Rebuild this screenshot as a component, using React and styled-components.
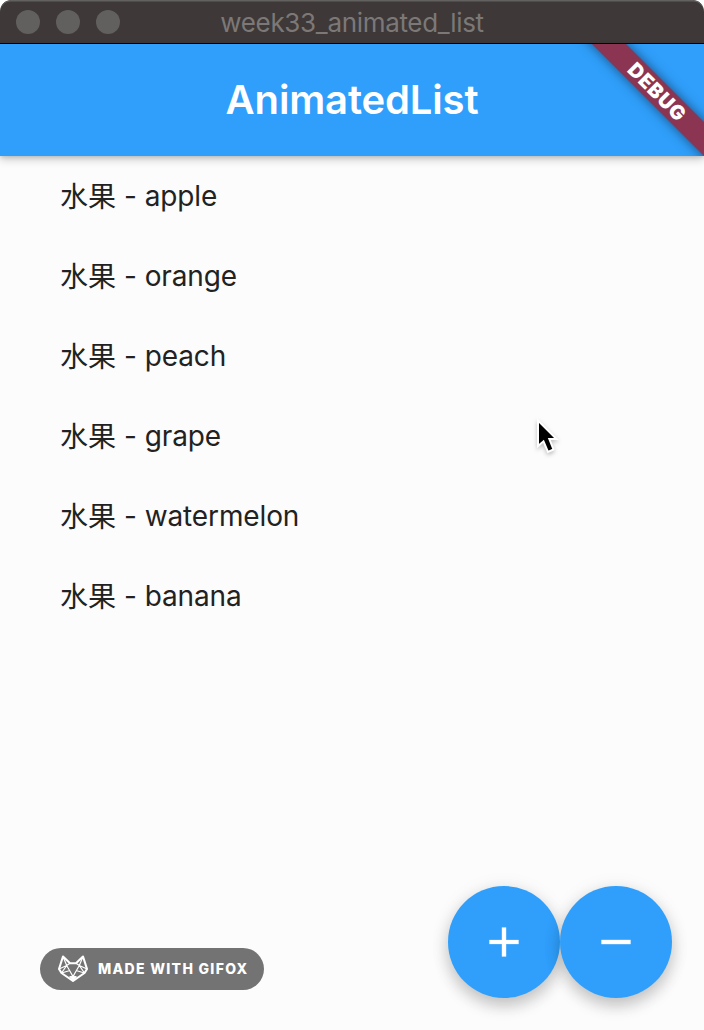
import React from "react";
import styled, { createGlobalStyle } from "styled-components";

const GlobalStyle = createGlobalStyle`
  *, *::before, *::after { box-sizing: border-box; }
  body { margin: 0; background: #fff; font-family: Inter, "Noto Sans CJK SC", sans-serif; }
`;

const Window = styled.div`
  position: relative;
  display: flex;
  flex-direction: column;
  width: 704px;
  height: 1030px;
  overflow: hidden;
  border-radius: 11px 11px 0 0;
  background: #fcfcfc;
`;

const TitleBar = styled.header`
  display: grid;
  grid-template-columns: 120px 1fr 120px;
  align-items: center;
  flex: none;
  height: 44px;
  padding: 0 16px;
  background: #3e3838;
  border-bottom: 1px solid #000;
  border-radius: 11px 11px 0 0;
  box-shadow: inset 0 1.5px 0 #636160;
`;

const Lights = styled.div`
  display: flex;
  gap: 16px;
`;

const Light = styled.span`
  width: 24px;
  height: 24px;
  border-radius: 50%;
  background: #625f5f;
`;

const WindowTitle = styled.div`
  text-align: center;
  white-space: nowrap;
  font-size: 26px;
  line-height: 32px;
  letter-spacing: -0.32px;
  color: #7c7877;
  padding-top: 2px;
`;

const AppBar = styled.div`
  position: relative;
  z-index: 1;
  display: flex;
  align-items: center;
  justify-content: center;
  flex: none;
  height: 112px;
  background: #2f9ffb;
  box-shadow: 0 4px 8px rgba(0, 0, 0, 0.18), 0 1px 4px rgba(0, 0, 0, 0.14);
`;

const AppTitle = styled.h1`
  margin: 0;
  font-size: 40px;
  line-height: 48px;
  font-weight: 600;
  letter-spacing: -0.15px;
  color: #fff;
`;

const BannerClip = styled.div`
  position: absolute;
  top: 0;
  right: 0;
  width: 150px;
  height: 112px;
  overflow: hidden;
`;

const Banner = styled.div`
  position: absolute;
  left: 2.5px;
  top: 35.5px;
  width: 200px;
  height: 24px;
  transform: rotate(45deg);
  background: #8b3553;
  box-shadow: 0 0 12px rgba(0, 0, 0, 0.5);
  text-align: center;
  font-size: 20px;
  line-height: 24px;
  letter-spacing: 0.7px;
  font-weight: 900;
  color: #fff;
`;

const List = styled.ul`
  flex: 1;
  margin: 0;
  padding: 0;
  list-style: none;
`;

const Item = styled.li`
  display: flex;
  align-items: center;
  height: 80px;
  padding-left: 60px;
  font-size: 28px;
  line-height: 40px;
  white-space: pre;
  color: #222;
`;

const Category = styled.span`
  margin-top: 2px;
`;

const Name = styled.span`
  letter-spacing: -0.12px;
`;

const Footer = styled.footer`
  display: flex;
  align-items: flex-end;
  justify-content: space-between;
  padding: 0 32px 32px 40px;
`;

const Badge = styled.div`
  display: flex;
  align-items: center;
  gap: 9px;
  width: 224px;
  height: 42px;
  margin-bottom: 8px;
  padding: 0 0 1px 17px;
  border-radius: 21px;
  background: #737373;
  color: #fff;
  font-size: 14px;
  font-weight: 800;
  letter-spacing: 1.3px;
  white-space: nowrap;
`;

const Actions = styled.div`
  display: flex;
`;

const Fab = styled.button`
  display: flex;
  align-items: center;
  justify-content: center;
  width: 112px;
  height: 112px;
  padding: 0;
  border: 0;
  border-radius: 50%;
  background: #2f9ffb;
  box-shadow: 0 8px 16px rgba(0, 0, 0, 0.2), 0 2px 20px rgba(0, 0, 0, 0.08);
`;

const Pointer = styled.svg`
  position: absolute;
  left: 531px;
  top: 414px;
  filter: drop-shadow(0 2px 2px rgba(0, 0, 0, 0.25));
`;

const fruits = ["apple", "orange", "peach", "grape", "watermelon", "banana"];

function FoxLogo() {
  return (
    <svg width="32" height="28" viewBox="0 0 32 28" fill="none" stroke="#fff" strokeLinejoin="round">
      <path d="M6 1.5 L13 8.3 H19 L26 1.5 L30 14 L27.5 18 L16 26 L4.5 18 L2 14 Z" strokeWidth="2.1" />
      <path d="M6 1.5 L9.7 10.5 L2 14 M26 1.5 L22.3 10.5 L30 14 M13 8.3 L9.7 10.5 L16 21.5 L22.3 10.5 L19 8.3 M4.5 18 L13 15.5 M27.5 18 L19 15.5 M4.5 18 L9.7 10.5 M27.5 18 L22.3 10.5" strokeWidth="1.2" />
      <path d="M12.5 21.8 L16 21 L19.5 21.8 L16 25.8 Z" fill="#fff" />
    </svg>
  );
}

function Glyph({ d }) {
  return (
    <svg width="50" height="50" viewBox="0 0 24 24" fill="#fff" stroke="#fff" strokeWidth="0.1">
      <path d={d} />
    </svg>
  );
}

export default function App() {
  return (
    <>
      <GlobalStyle />
      <Window>
        <TitleBar>
          <Lights>
            <Light />
            <Light />
            <Light />
          </Lights>
          <WindowTitle>week33_animated_list</WindowTitle>
        </TitleBar>
        <AppBar>
          <AppTitle>AnimatedList</AppTitle>
          <BannerClip>
            <Banner>DEBUG</Banner>
          </BannerClip>
        </AppBar>
        <List>
          {fruits.map((fruit) => (
            <Item key={fruit}>
              <Category>水果</Category>
              <span> - </span>
              <Name>{fruit}</Name>
            </Item>
          ))}
        </List>
        <Footer>
          <Badge>
            <FoxLogo />
            MADE WITH GIFOX
          </Badge>
          <Actions>
            <Fab aria-label="Add">
              <Glyph d="M19 13h-6v6h-2v-6H5v-2h6V5h2v6h6v2z" />
            </Fab>
            <Fab aria-label="Remove">
              <Glyph d="M19 13H5v-2h14v2z" />
            </Fab>
          </Actions>
        </Footer>
        <Pointer width="30" height="42" viewBox="0 0 30 42">
          <path d="M7 6.5 V32 L12.5 27.3 L17 38 L22.5 35.5 L18.3 25 H25.5 Z" fill="#000" stroke="#fff" strokeWidth="2" />
        </Pointer>
      </Window>
    </>
  );
}
